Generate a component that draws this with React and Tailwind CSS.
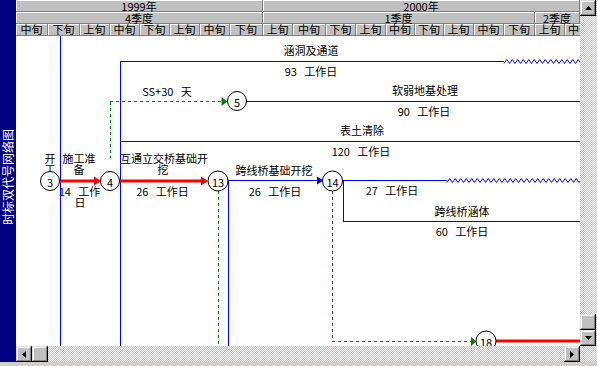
import React from "react";

const FONT = "'Noto Sans CJK SC', 'Noto Sans', sans-serif";

const btn =
  "bg-[#c0c0c0] shadow-[inset_-1px_-1px_#000000,inset_1px_1px_#dfdfdf,inset_-2px_-2px_#808080,inset_2px_2px_#ffffff] flex items-center justify-center";
const track =
  "bg-[image:repeating-conic-gradient(#c0c0c0_0%_25%,#ffffff_0%_50%)] bg-[length:2px_2px]";

function zig(x0, x1, y, amp = 2, step = 2.75) {
  const pts = [];
  let i = 0;
  for (let x = x0; x <= x1 + step; x += step, i++) {
    pts.push(`${x},${i % 2 === 0 ? y + amp : y - amp}`);
  }
  return pts.join(" ");
}

const cell =
  "h-full border-r border-[#808080] shadow-[inset_1px_1px_#ffffff] flex items-center justify-center whitespace-nowrap";

const xun = [
  ["中旬", "w-[32px]"],
  ["下旬", "w-[32px]"],
  ["上旬", "w-[30px]"],
  ["中旬", "w-[30px]"],
  ["下旬", "w-[30px]"],
  ["上旬", "w-[30px]"],
  ["中旬", "w-[30px]"],
  ["下旬", "w-[33px]"],
  ["上旬", "w-[30px]"],
  ["中旬", "w-[33px]"],
  ["下旬", "w-[30px]"],
  ["上旬", "w-[30px]"],
  ["中旬", "w-[29px]"],
  ["下旬", "w-[29px]"],
  ["上旬", "w-[30px]"],
  ["中旬", "w-[30px]"],
  ["下旬", "w-[31px]"],
  ["上旬", "w-[30px]"],
];

function Header() {
  return (
    <div className="h-[36px] bg-[#c0c0c0] text-[11px] leading-[11px] text-black flex flex-col">
      <div className="flex h-[12px] border-b border-[#808080]">
        <div className={`${cell} w-[247px] pt-[2px]`}>1999年</div>
        <div className={`${cell} w-[317px] pt-[2px]`}>2000年</div>
      </div>
      <div className="flex h-[12px] border-b border-[#808080]">
        <div className={`${cell} w-[247px] pt-[1px]`}>4季度</div>
        <div className={`${cell} w-[272px] pt-[1px]`}>1季度</div>
        <div className={`${cell} w-[45px] pt-[1px]`}>2季度</div>
      </div>
      <div className="flex h-[12px] border-b border-[#808080]">
        {xun.map(([t, w], i) => (
          <div key={i} className={`${cell} ${w}`}>
            {t}
          </div>
        ))}
        <div className="h-full w-[15px] shadow-[inset_1px_1px_#ffffff] flex items-center overflow-hidden whitespace-nowrap pl-[3px]">
          中旬
        </div>
      </div>
    </div>
  );
}

function T({ x, y, children }) {
  return (
    <text
      x={x}
      y={y}
      textAnchor="middle"
      dominantBaseline="central"
      fontSize="11"
      fontFamily={FONT}
      fill="#000"
    >
      {children}
    </text>
  );
}

function Node({ cx, cy, n, r = 9.5 }) {
  return (
    <g>
      <circle cx={cx} cy={cy} r={r} fill="#fff" stroke="#000" strokeWidth="1" />
      <T x={cx} y={cy + 0.5}>
        {n}
      </T>
    </g>
  );
}

const S = "\u00a0\u00a0\u00a0";

function Chart() {
  const blue = "#0000ff";
  const green = "#008000";
  const red = "#ff0000";
  return (
    <svg width="564" height="310" className="block">
      <T x={295} y={14}>涵洞及通道</T>
      <T x={295} y={35}>{`93${S}工作日`}</T>
      <T x={151} y={55}>{`SS+30${S}天`}</T>
      <T x={409} y={54}>软弱地基处理</T>
      <T x={408} y={75}>{`90${S}工作日`}</T>
      <T x={346} y={94}>表土清除</T>
      <T x={345} y={115}>{`120${S}工作日`}</T>
      <T x={34} y={122}>开</T>
      <T x={34} y={133}>工</T>
      <T x={63} y={122}>施工准</T>
      <T x={63} y={133}>备</T>
      <T x={63.5} y={155}>{`14${S}工作`}</T>
      <T x={64} y={166}>日</T>
      <T x={148} y={122}>互通立交桥基础开</T>
      <T x={147} y={133}>挖</T>
      <T x={146.5} y={155}>{`26${S}工作日`}</T>
      <T x={258} y={134}>跨线桥基础开挖</T>
      <T x={259} y={155}>{`26${S}工作日`}</T>
      <T x={376} y={154}>{`27${S}工作日`}</T>
      <T x={446} y={175}>跨线桥涵体</T>
      <T x={446} y={195}>{`60${S}工作日`}</T>

      <g stroke={blue} strokeWidth="1" fill="none">
        <line x1="44.5" y1="0" x2="44.5" y2="310" />
        <line x1="104.5" y1="25.5" x2="104.5" y2="310" />
        <line x1="104" y1="25.5" x2="488" y2="25.5" />
        <polyline points={zig(488, 564, 25.5)} />
        <line x1="230" y1="65.5" x2="564" y2="65.5" />
        <line x1="104" y1="105.5" x2="564" y2="105.5" />
        <line x1="212.5" y1="144.5" x2="212.5" y2="310" />
        <line x1="212" y1="144.5" x2="302" y2="144.5" />
        <line x1="326" y1="144.5" x2="431" y2="144.5" />
        <polyline points={zig(431, 564, 144.5)} />
        <line x1="327.5" y1="144.5" x2="327.5" y2="185.5" />
        <line x1="327" y1="185.5" x2="564" y2="185.5" />
      </g>
      <polygon points="301,140.5 307.5,144.5 301,148.5" fill={blue} />

      <g stroke={green} strokeWidth="1" fill="none" strokeDasharray="3 3">
        <line x1="94.5" y1="66" x2="94.5" y2="122" />
        <line x1="94" y1="65.5" x2="205" y2="65.5" />
        <line x1="202.5" y1="155" x2="202.5" y2="310" />
        <line x1="316.5" y1="155" x2="316.5" y2="305.5" />
        <line x1="316" y1="305.5" x2="455" y2="305.5" />
      </g>
      <polygon points="205.5,61 211.5,65.5 205.5,70" fill={green} />
      <polygon points="455,301 460.5,305.5 455,310" fill={green} />

      <g stroke={red} strokeWidth="3" fill="none">
        <line x1="43" y1="145" x2="80" y2="145" />
        <line x1="103" y1="145" x2="187" y2="145" />
        <line x1="480" y1="305" x2="564" y2="305" />
      </g>
      <polygon points="78,140.5 85,145 78,149.5" fill={red} />
      <polygon points="185,140.5 192,145 185,149.5" fill={red} />

      <Node cx={34} cy={145} n="3" />
      <Node cx={94} cy={145} n="4" />
      <Node cx={221} cy={65} n="5" />
      <Node cx={202} cy={145} n="13" r={10} />
      <Node cx={316.5} cy={145} n="14" r={10} />
      <Node cx={470} cy={305} n="18" r={10} />
    </svg>
  );
}

function Arrow({ dir }) {
  const pts = {
    up: "0,4 3.5,0 7,4",
    down: "0,0 3.5,4 7,0",
    left: "4,0 0,3.5 4,7",
    right: "0,0 4,3.5 0,7",
  }[dir];
  const vertical = dir === "up" || dir === "down";
  return (
    <svg width={vertical ? 7 : 4} height={vertical ? 4 : 7} className="block">
      <polygon points={pts} fill="#000" />
    </svg>
  );
}

export default function App() {
  return (
    <div
      className="w-[597px] h-[366px] bg-[#d4d0c8] flex flex-col overflow-hidden"
      style={{ fontFamily: FONT }}
    >
      <div className="flex h-[362px]">
        <div className="w-[16px] h-full bg-[#000080] flex items-center justify-center pb-[8px]">
          <span className="-rotate-90 whitespace-nowrap text-white text-[12px] leading-none">
            时标双代号网络图
          </span>
        </div>
        <div className="w-[564px] flex flex-col">
          <Header />
          <div className="h-[310px] bg-white overflow-hidden">
            <Chart />
          </div>
          <div className={`h-[16px] flex ${track}`}>
            <div className={`${btn} w-[16px] h-full`}>
              <Arrow dir="left" />
            </div>
            <div className={`${btn} w-[16px] h-full`} />
            <div className="flex-1" />
            <div className={`${btn} w-[16px] h-full`}>
              <Arrow dir="right" />
            </div>
          </div>
        </div>
        <div className={`w-[17px] flex flex-col ${track}`}>
          <div className="w-[16px] h-[346px] flex flex-col">
            <div className={`${btn} h-[16px]`}>
              <Arrow dir="up" />
            </div>
            <div className="flex-1" />
            <div className={`${btn} h-[16px]`} />
            <div className={`${btn} h-[16px]`}>
              <Arrow dir="down" />
            </div>
          </div>
        </div>
      </div>
      <div className="h-[4px] bg-[#d4d0c8]" />
    </div>
  );
}
